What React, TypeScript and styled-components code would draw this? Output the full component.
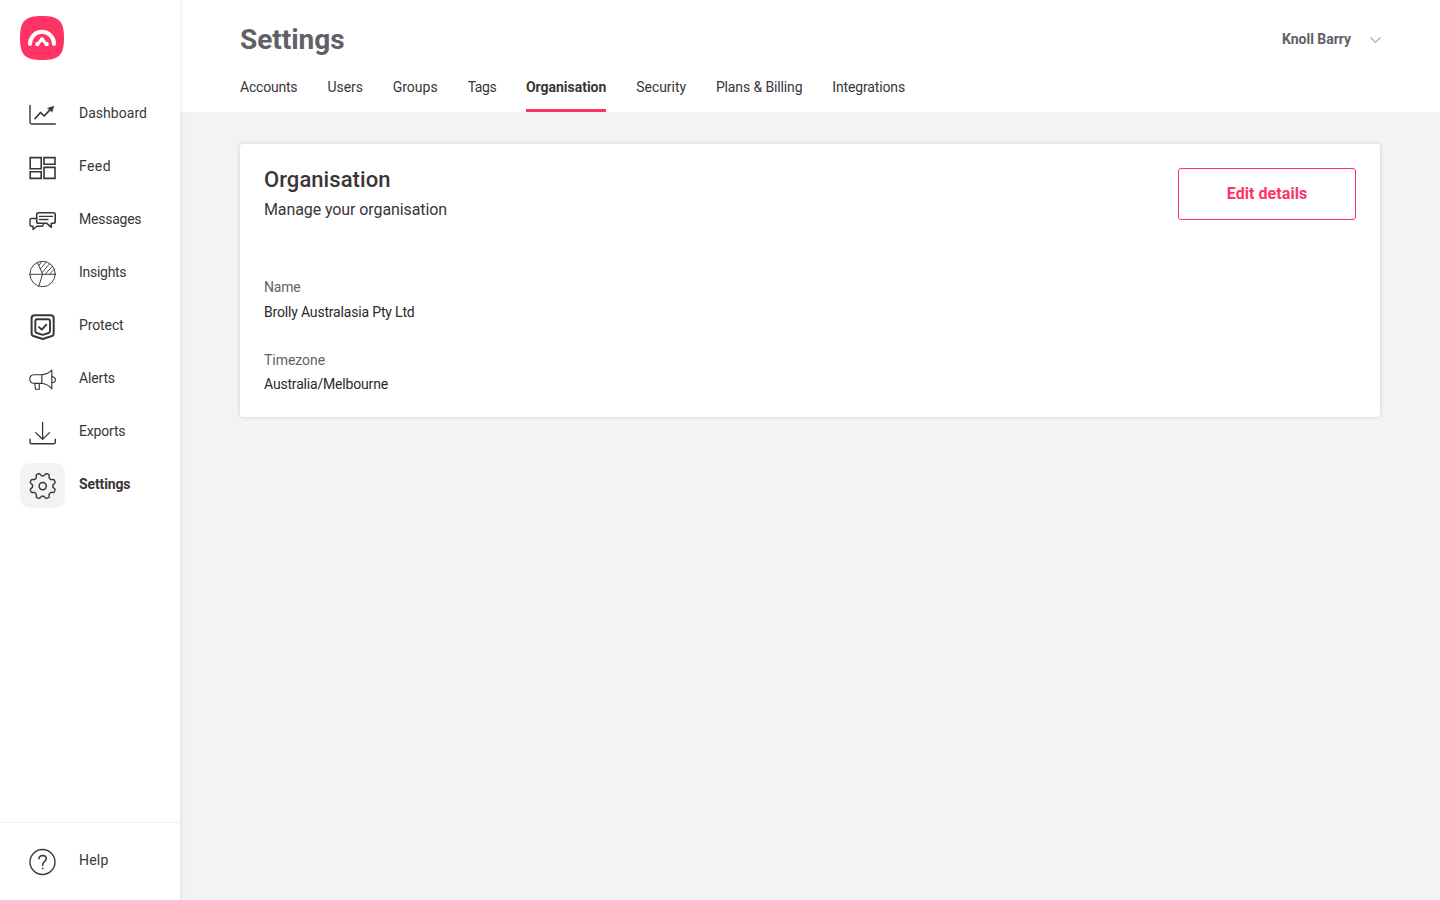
import React from 'react';
import styled, { createGlobalStyle } from 'styled-components';

const ink = '#3a3538';
const muted = '#5f6166';
const pink = '#ff3366';

const GlobalStyle = createGlobalStyle`
  *, *::before, *::after { box-sizing: border-box; }
  body {
    margin: 0;
    background: #f2f3f5;
    color: ${ink};
    font-family: Roboto, 'Liberation Sans', sans-serif;
    font-size: 14px;
  }
`;

const Shell = styled.div`
  display: flex;
  height: 100vh;
  overflow: hidden;
`;

const Sidebar = styled.aside`
  position: relative;
  z-index: 1;
  display: flex;
  flex-direction: column;
  flex: none;
  width: 180px;
  background: #fff;
  box-shadow: 0 0 5px rgba(0, 0, 0, 0.12);
`;

const LogoLink = styled.a`
  display: block;
  width: 44px;
  height: 44px;
  margin: 16px 0 32px 20px;
  svg { display: block; }
`;

const Nav = styled.nav`
  display: flex;
  flex-direction: column;
  gap: 8px;
  padding-left: 20px;
`;

const NavItem = styled.a<{ $active?: boolean; $tracking: number }>`
  display: flex;
  align-items: flex-start;
  gap: 14px;
  height: 45px;
  font-size: 14px;
  line-height: 20px;
  font-weight: ${p => (p.$active ? 700 : 400)};
  letter-spacing: ${p => p.$tracking}px;
`;

const NavLabel = styled.span`
  padding-top: 11px;
`;

const IconTile = styled.span<{ $active?: boolean }>`
  width: 45px;
  height: 45px;
  padding: 9px 0 0 9px;
  border-radius: 11px;
  background: ${p => (p.$active ? '#f2f3f5' : 'transparent')};
`;

const Icon = styled.svg.attrs({ width: 28, height: 28, viewBox: '0 0 28 28' })`
  display: block;
  fill: none;
  stroke: ${ink};
  stroke-width: 1.4;
  stroke-linecap: round;
  stroke-linejoin: round;
`;

const SidebarFooter = styled.div`
  height: 78px;
  margin-top: auto;
  padding: 16px 0 0 20px;
  border-top: 1px solid #f0f0f2;
`;

const Main = styled.main`
  flex: 1;
  min-width: 0;
`;

const Header = styled.header`
  display: flex;
  flex-direction: column;
  justify-content: space-between;
  height: 112px;
  padding: 22px 60px 0;
  background: #fff;
`;

const TitleBar = styled.div`
  display: flex;
  align-items: flex-start;
  justify-content: space-between;
  height: 36px;
`;

const PageTitle = styled.h1`
  margin: 0;
  font-size: 28px;
  line-height: 36px;
  font-weight: 700;
  letter-spacing: -0.04px;
  color: ${muted};
`;

const UserMenu = styled.div`
  display: flex;
  align-items: center;
  gap: 19px;
  padding-top: 7px;
  margin-right: -1px;
  font-weight: 700;
  line-height: 20px;
  color: ${muted};
  letter-spacing: -0.03px;
`;

const Chevron = styled.svg`
  display: block;
  fill: none;
  stroke: #cf9c80;
  stroke-width: 1.1;
  margin-top: 2px;
`;

const Tabs = styled.nav`
  display: flex;
  gap: 30px;
`;

const Tab = styled.a<{ $active?: boolean; $width: number; $tracking: number }>`
  width: ${p => p.$width}px;
  height: 36px;
  padding-top: 1px;
  line-height: 20px;
  white-space: nowrap;
  border-bottom: 3px solid ${p => (p.$active ? pink : 'transparent')};
  font-weight: ${p => (p.$active ? 700 : 400)};
  letter-spacing: ${p => p.$tracking}px;
`;

const Card = styled.section`
  height: 273px;
  margin: 32px 60px 0;
  padding: 24px;
  background: #fff;
  border-radius: 3px;
  box-shadow: 0 0 4px rgba(0, 0, 0, 0.15);
`;

const CardHeader = styled.div`
  display: flex;
  justify-content: space-between;
  align-items: flex-start;
  height: 109px;
`;

const CardTitle = styled.h2`
  margin: -2px 0 4px;
  font-size: 22px;
  line-height: 28px;
  font-weight: 500;
  letter-spacing: 0.06px;
`;

const CardSubtitle = styled.p`
  margin: 0;
  font-size: 16px;
  line-height: 24px;
  letter-spacing: -0.096px;
`;

const OutlineButton = styled.button`
  width: 178px;
  height: 52px;
  padding: 0;
  border: 1px solid ${pink};
  border-radius: 3px;
  background: #fff;
  color: ${pink};
  font: 700 16px/20px Roboto, sans-serif;
  letter-spacing: 0.06px;
`;

const Details = styled.dl`
  display: grid;
  gap: 24px;
  margin: 0;
`;

const Term = styled.dt<{ $tracking: number }>`
  height: 24.5px;
  line-height: 20px;
  color: ${muted};
  letter-spacing: ${p => p.$tracking}px;
`;

const Value = styled.dd`
  margin: 0;
  height: 24px;
  line-height: 20px;
  letter-spacing: -0.18px;
  color: #2c282b;
`;

function gearPath() {
  const points: string[] = [];
  const steps = 192;
  for (let i = 0; i < steps; i++) {
    const a = (i / steps) * Math.PI * 2;
    const wave = Math.max(-1, Math.min(1, -Math.cos(8 * a) * 1.7));
    const r = 11.6 + wave * 1.35;
    points.push(`${(13.7 + r * Math.cos(a)).toFixed(2)} ${(14 + r * Math.sin(a)).toFixed(2)}`);
  }
  return `M${points.join('L')}Z`;
}

const icons: Record<string, React.ReactNode> = {
  Dashboard: (
    <>
      <path d="M1 4.4V21.3Q1 23 2.700 23H26.300" />
      <path d="M6 17.700L11.500 11.500L15.200 15L22.500 7.200" strokeWidth="1.700" />
      <path d="M18.800 7.100L24.800 5.200L23.200 10.800Z" fill={ink} strokeWidth="0.500" />
    </>
  ),
  Feed: (
    <g strokeLinejoin="miter" strokeWidth="1.600">
      <path d="M1.200 3.600H12.200V14.700H1.200ZM15 3.600H26V10.200H15ZM1.200 17.700H12.200V24.400H1.200ZM15 13.400H26V24.400H15Z" />
    </g>
  ),
  Messages: (
    <>
      <path d="M9.500 5.800H24.400Q26.200 5.800 26.200 7.600V14.500Q26.200 16.300 24.400 16.300H22.300V20.300L17.800 16.300H9.500Q7.700 16.300 7.700 14.500V7.600Q7.700 5.800 9.500 5.800Z" strokeWidth="1.600" />
      <path d="M10.500 9.400H23.500M10.500 12.500H19" strokeWidth="1.300" />
      <path d="M7.500 11.500H2.500Q1 11.500 1 13V17.700Q1 19.200 2.500 19.200H4V22.600L7.800 19.200H12.700Q14.200 19.200 14.200 17.700V16.700" strokeWidth="1.400" />
    </>
  ),
  Insights: (
    <g strokeWidth="0.950">
      <circle cx="13.600" cy="14" r="12.700" />
      <path d="M.9 14.300H26.300M8.400 2.400L13.600 14.200L9.800 26.100" />
      <path d="M9.800 5.500L12.900 1.600M11.400 9L17.300 1.900M13.100 12.600L20.700 3.600M16.400 14L23.500 6.200M20.600 14L25.500 9" strokeWidth="0.850" />
    </g>
  ),
  Protect: (
    <>
      <path d="M5.600 2.200H21.700Q24.700 2.200 24.700 5.200V20.400Q24.700 22.300 22.900 23L13.700 26L4.400 23Q2.600 22.300 2.600 20.400V5.200Q2.600 2.200 5.600 2.200Z" strokeWidth="2" />
      <path d="M8.300 6.300H19Q21 6.300 21 8.300V17.800Q21 19.400 19.500 20L13.700 21.900L7.800 20Q6.300 19.400 6.300 17.800V8.300Q6.300 6.300 8.300 6.300Z" strokeWidth="1.900" />
      <path d="M10 14.100L12.800 16.600L17.300 11.700" strokeWidth="1.900" />
    </>
  ),
  Alerts: (
    <g strokeWidth="1.150">
      <path d="M12.800 8.700H5Q.8 8.900.8 13T5 17.300H12.800Z" />
      <path d="M12.800 8.700Q19 8.100 22.800 4.200V22.800Q19 18.200 12.800 17.300" />
      <path d="M22.800 10.600Q26.400 11 26.400 13.700T22.800 16.800M5.800 17.500L6.500 23.200H10.300V17.500" />
    </g>
  ),
  Exports: (
    <>
      <path d="M13.600 3.300V20M6.700 13.600L13.600 20.300L20.500 13.600" strokeWidth="1.300" />
      <path d="M1 20.300V23.200Q1 24.800 2.600 24.800H24.700Q26.300 24.800 26.300 23.200V20.300" strokeWidth="1.400" />
    </>
  ),
  Settings: (
    <>
      <path d={gearPath()} strokeWidth="1.400" />
      <circle cx="13.700" cy="14.100" r="3.600" strokeWidth="1.500" />
    </>
  ),
  Help: (
    <>
      <circle cx="13.500" cy="14" r="12.500" strokeWidth="1.400" />
      <path d="M9.900 10.800Q10.200 7.400 13.700 7.400Q17.300 7.500 17.300 10.600C17.300 13.500 13.700 13.400 13.700 17.200" strokeWidth="1.500" />
      <path d="M13.700 20.300V20.500" strokeWidth="1.700" />
    </>
  ),
};

const navItems = [
  { label: 'Dashboard', tracking: 0.03 },
  { label: 'Feed', tracking: 0.4 },
  { label: 'Messages', tracking: -0.24 },
  { label: 'Insights', tracking: -0.28 },
  { label: 'Protect', tracking: -0.11 },
  { label: 'Alerts', tracking: -0.16 },
  { label: 'Exports', tracking: -0.19 },
  { label: 'Settings', tracking: -0.13, active: true },
];

const tabs = [
  { label: 'Accounts', width: 57.5, tracking: -0.21 },
  { label: 'Users', width: 35.2, tracking: -0.08 },
  { label: 'Groups', width: 45, tracking: 0.01 },
  { label: 'Tags', width: 28.3, tracking: -0.42 },
  { label: 'Organisation', width: 80.3, tracking: -0.02, active: true },
  { label: 'Security', width: 49.6, tracking: -0.05 },
  { label: 'Plans & Billing', width: 86.4, tracking: -0.12 },
  { label: 'Integrations', width: 73, tracking: -0.14 },
];

const details = [
  { term: 'Name', value: 'Brolly Australasia Pty Ltd', tracking: -0.2 },
  { term: 'Timezone', value: 'Australia/Melbourne', tracking: -0.05 },
];

function NavLink({ label, tracking, active }: { label: string; tracking: number; active?: boolean }) {
  return (
    <NavItem $active={active} $tracking={tracking}>
      <IconTile $active={active}>
        <Icon>{icons[label]}</Icon>
      </IconTile>
      <NavLabel>{label}</NavLabel>
    </NavItem>
  );
}

function Logo() {
  return (
    <svg width="44" height="44" viewBox="0 0 44 44">
      <path
        d="M22 0C39 0 44 5 44 22S39 44 22 44S0 39 0 22S5 0 22 0Z"
        fill={pink}
      />
      <g fill="none" stroke="#fff" strokeLinecap="round" strokeLinejoin="round">
        <path d="M10 28A12 12.300 0 0 1 34 28" strokeWidth="4" />
        <path d="M17.600 28L22 23.400L26.400 28" strokeWidth="3" />
      </g>
      <g fill="#fff">
        <circle cx="22" cy="23.300" r="2.100" />
        <circle cx="17.400" cy="28.100" r="2.200" />
        <circle cx="26.600" cy="28.100" r="2.200" />
      </g>
    </svg>
  );
}

export default function App() {
  return (
    <>
      <GlobalStyle />
      <Shell>
        <Sidebar>
          <LogoLink>
            <Logo />
          </LogoLink>
          <Nav>
            {navItems.map(item => (
              <NavLink key={item.label} {...item} />
            ))}
          </Nav>
          <SidebarFooter>
            <NavLink label="Help" tracking={0.2} />
          </SidebarFooter>
        </Sidebar>
        <Main>
          <Header>
            <TitleBar>
              <PageTitle>Settings</PageTitle>
              <UserMenu>
                Knoll Barry
                <Chevron width="11" height="6" viewBox="0 0 11 6">
                  <path d="M.5.500L5.500 5.300L10.500.500" />
                </Chevron>
              </UserMenu>
            </TitleBar>
            <Tabs>
              {tabs.map(t => (
                <Tab key={t.label} $active={t.active} $width={t.width} $tracking={t.tracking}>
                  {t.label}
                </Tab>
              ))}
            </Tabs>
          </Header>
          <Card>
            <CardHeader>
              <div>
                <CardTitle>Organisation</CardTitle>
                <CardSubtitle>Manage your organisation</CardSubtitle>
              </div>
              <OutlineButton>Edit details</OutlineButton>
            </CardHeader>
            <Details>
              {details.map(d => (
                <div key={d.term}>
                  <Term $tracking={d.tracking}>{d.term}</Term>
                  <Value>{d.value}</Value>
                </div>
              ))}
            </Details>
          </Card>
        </Main>
      </Shell>
    </>
  );
}
